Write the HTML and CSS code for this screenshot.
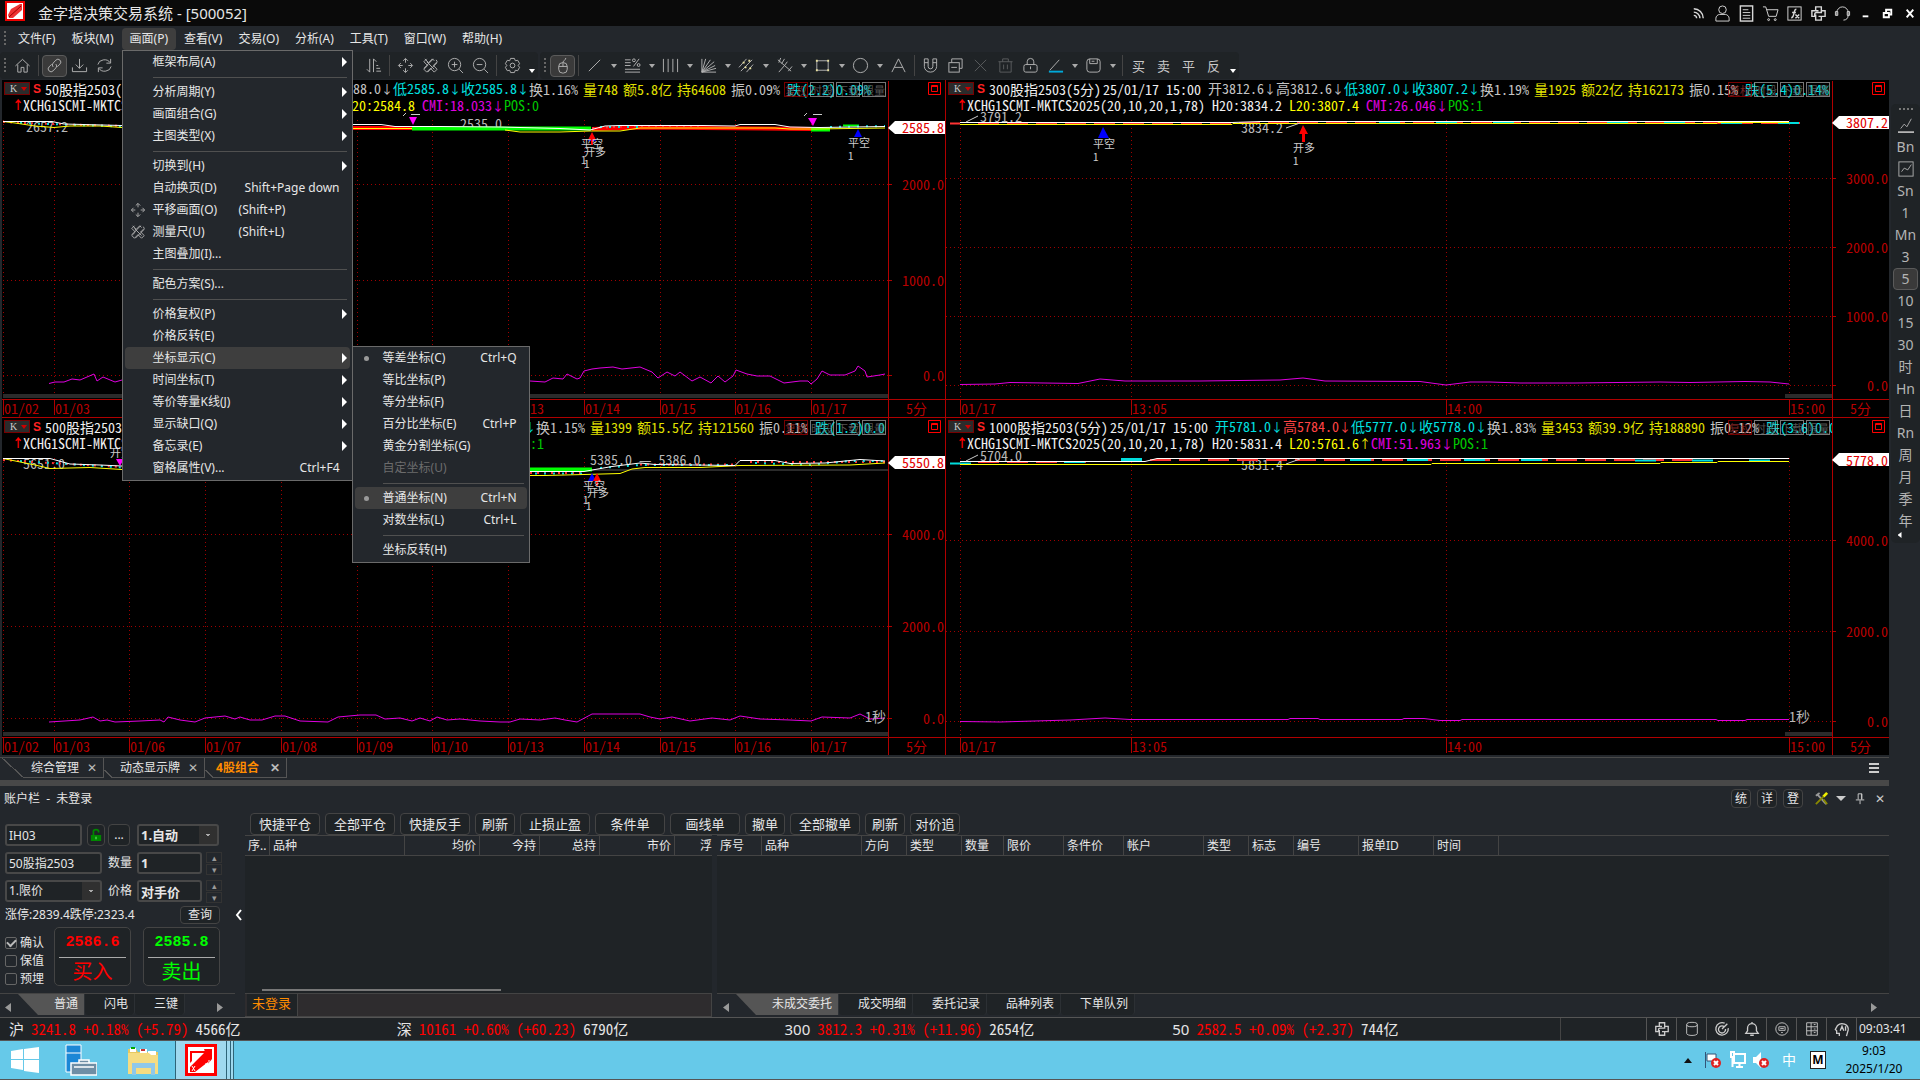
FILE: index.html
```html
<!DOCTYPE html>
<html lang="zh-CN">
<head>
    <meta charset="UTF-8">
    <meta name="viewport" content="width=device-width, initial-scale=1.0">
    <title>金字塔决策交易系统 - [500052]</title>
    <link rel="stylesheet" href="styles.css">
</head>
<body>
    <!-- 图标库 -->
    <svg class="sprite" aria-hidden="true">
        <symbol id="i-home" viewBox="0 0 18 18"><path d="M1.500 9.500 9 2.500l7.500 7M4 8v8h3.500v-5h3v5H14V8"/></symbol>
        <symbol id="i-link" viewBox="0 0 18 18"><path d="M7.500 10.500a3 3 0 0 1 0-4l3-3.200a3 3 0 0 1 4.300 4.200L12 10.300M10.500 7.500a3 3 0 0 1 0 4l-3 3.200a3 3 0 0 1-4.300-4.200L6 7.700"/></symbol>
        <symbol id="i-down" viewBox="0 0 18 18"><path d="M9 2v10M5 8l4 4 4-4M1.500 11v4.500h15V11"/></symbol>
        <symbol id="i-refresh" viewBox="0 0 18 18"><path d="M2 8a7 6 0 0 1 13-2M15.500 2v4.500H11M16 10a7 6 0 0 1-13 2M2.500 16v-4.500H7"/></symbol>
        <symbol id="i-sort" viewBox="0 0 18 18"><path d="M5 2v14l-3-3M9 16V2l3 3M12 9h2M12 12h4M12 15h5"/></symbol>
        <symbol id="i-move" viewBox="0 0 18 18"><path d="M9 6V2M6.500 4 9 1.500 11.500 4M9 12v4M6.500 14 9 16.500l2.500-2.500M6 9H2M4 6.500 1.500 9 4 11.500M12 9h4M14 6.500 16.500 9 14 11.500"/></symbol>
        <symbol id="i-ruler" viewBox="0 0 18 18"><path d="m3 2 4 4 4-4 2 2M15 3l1 2-4 4 4 4-3 3-4-4-4 4-3-3 4-4-4-4 3-3M12 2 2 12M16 6 6 16M5 5l8 8"/></symbol>
        <symbol id="i-zin" viewBox="0 0 18 18"><circle cx="8" cy="8" r="6.500"/><path d="m13 13 4 4M5 8h6M8 5v6"/></symbol>
        <symbol id="i-zout" viewBox="0 0 18 18"><circle cx="8" cy="8" r="6.500"/><path d="m13 13 4 4M5 8h6"/></symbol>
        <symbol id="i-gear" viewBox="0 0 18 18"><path d="M7 1.500h4l1 2.500 2.500-.5 2 3.500-1.500 2 1.500 2-2 3.500L12 14l-1 2.500H7L6 14l-2.500.5-2-3.500L3 9 1.500 7l2-3.500L6 4z"/><circle cx="9" cy="9" r="2.500"/></symbol>
        <symbol id="i-mouse" viewBox="0 0 18 18"><rect x="5" y="6" width="9" height="11" rx="4"/><path d="M5 10h9M9.500 6v4M9.500 6c0-3 3-2 3-5"/></symbol>
        <symbol id="i-line" viewBox="0 0 18 18"><path d="M3 15 15 3"/></symbol>
        <symbol id="i-pct" viewBox="0 0 18 18"><path d="M1 3h6M1 6h6M1 9h6M1 13h16M1 16h16M16 2 10 10"/><circle cx="10.500" cy="3.500" r="1.500"/><circle cx="15.500" cy="8.500" r="1.500"/></symbol>
        <symbol id="i-bars" viewBox="0 0 18 18"><path d="M1.500 2v14M6.500 2v14M11.500 2v14M16.500 2v14"/></symbol>
        <symbol id="i-fan" viewBox="0 0 18 18"><path d="M2 2v14h15M2 16 6 2M2 16 11 3M2 16 15 5M2 16l14-7M2 16l15-4"/></symbol>
        <symbol id="i-hatch" viewBox="0 0 18 18"><path d="M1 11 9 2M3 15 15 3M9 16l7-8"/><path stroke="#e8e0a0" stroke-width="2" d="M5 6h2M11 4h2M7 11h2M12 12h2"/></symbol>
        <symbol id="i-fork" viewBox="0 0 18 18"><path d="m2 3 14 12M3 16 9 9M5 1 3 6M9 2 6 7M12 5 9 9M17 10l-4 5"/></symbol>
        <symbol id="i-rect" viewBox="0 0 18 18"><rect x="3" y="4" width="12" height="10"/><path stroke="#e8e0a0" stroke-width="2" d="M2 4h2M14 4h2M2 14h2M14 14h2"/></symbol>
        <symbol id="i-circle" viewBox="0 0 18 18"><circle cx="9" cy="9" r="7.500"/></symbol>
        <symbol id="i-text" viewBox="0 0 18 18"><path d="M2 16 9 2l7 14M4.500 11h9"/></symbol>
        <symbol id="i-magnet" viewBox="0 0 18 18"><path d="M2.500 2v8a6.500 6 0 0 0 13 0V2h-4v8a2.500 2.500 0 0 1-5 0V2zM2.500 6h4M11.500 6h4"/></symbol>
        <symbol id="i-copy" viewBox="0 0 18 18"><rect x="2" y="6" width="11" height="10"/><path d="M5 6V2h11v10h-3M4.500 11h6"/></symbol>
        <symbol id="i-x" viewBox="0 0 18 18"><path d="m3 3 12 12M15 3 3 15"/></symbol>
        <symbol id="i-trash" viewBox="0 0 18 18"><path d="M1.500 5h15M6 5V2h6v3M3 5v11h12V5M7 8v5M11 8v5"/></symbol>
        <symbol id="i-lock" viewBox="0 0 18 18"><rect x="2" y="8" width="14" height="8" rx="2"/><path d="M5.500 8V5a3.500 3.500 0 0 1 7 0v3M9 10v3"/></symbol>
        <symbol id="i-pen" viewBox="0 0 18 18"><path d="M3 14 13 3"/><path stroke="#00a8d8" stroke-width="2" d="M2 15.500h15"/></symbol>
        <symbol id="i-save" viewBox="0 0 18 18"><rect x="2" y="2" width="14" height="14" rx="3"/><path d="M5 2v5h8V2M7 4.500h3"/></symbol>
        <symbol id="i-rss" viewBox="0 0 18 18"><path d="M4 4a10 10 0 0 1 10 10M4 7.500a6.500 6.500 0 0 1 6.500 6.500M4 11a3 3 0 0 1 3 3" stroke-width="1.500"/></symbol>
        <symbol id="i-user" viewBox="0 0 18 18"><circle cx="9" cy="5" r="4"/><path d="M2 17v-3c0-2 2-4 4-4h6c2 0 4 2 4 4v3z"/></symbol>
        <symbol id="i-doc" viewBox="0 0 18 18"><rect x="2.500" y="1" width="13" height="16" stroke-width="1.500"/><path d="M5 5h6M5 8h8M5 11h8M5 14h8"/></symbol>
        <symbol id="i-cart" viewBox="0 0 18 18"><path d="M1 2h3l3 10h8l2-7H5"/><circle cx="7" cy="15.500" r="1"/><circle cx="14" cy="15.500" r="1"/></symbol>
        <symbol id="i-fx" viewBox="0 0 18 18"><rect x="2" y="2" width="14" height="14"/><path stroke-width="1.500" d="M11 4.500c-2 0-2 2-2.500 4S8 13.500 5.500 13.500M6.500 8h4M10 10l4 4M14 10l-4 4"/></symbol>
        <symbol id="i-py" viewBox="0 0 18 18"><path stroke-width="1.500" d="M6 6V2h6v6H7c-1 0-2 1-2 2v2H2V6h7M12 6h4v6H9M6 10v6h6v-4"/></symbol>
        <symbol id="i-head" viewBox="0 0 18 18"><path d="M3 11V8a6 6 0 0 1 12 0v3c0 3-2 5-5 5M1.500 7v4H4V7zM14 7v4h2.500V7z"/></symbol>
        <symbol id="i-trend" viewBox="0 0 18 18"><path d="M3 13l4-5 3 3 5-9"/><path stroke-width="2" d="M0 17h18"/></symbol>
        <symbol id="i-trendbox" viewBox="0 0 18 18"><rect x="1" y="1" width="16" height="16"/><path d="m4 12 3-4 4 2 4-6"/></symbol>
        <symbol id="i-db" viewBox="0 0 18 18"><ellipse cx="9" cy="4" rx="6" ry="2.500"/><path d="M3 4v10c0 3 12 3 12 0V4"/></symbol>
        <symbol id="i-target" viewBox="0 0 18 18"><path stroke-width="1.500" d="M12 2.500A7 7 0 1 0 16 8M11 6a4 4 0 1 0 2 3M9 9l6-6"/></symbol>
        <symbol id="i-bell" viewBox="0 0 18 18"><path stroke-width="1.500" d="M2 14h14l-2-3V8a5 5 0 0 0-10 0v3zM7 16h4M9 1v2"/></symbol>
        <symbol id="i-chat" viewBox="0 0 18 18"><circle cx="9" cy="9" r="7"/><path d="M5.500 6.500h7v4h-7zM8 13h2M7 8.500h4"/></symbol>
        <symbol id="i-server" viewBox="0 0 18 18"><path d="M3 2h12v14H3zM3 6.500h12M3 11h12M8 2v14M11 4h2M11 9h2M11 13h2"/></symbol>
        <symbol id="i-ai" viewBox="0 0 18 18"><path stroke-width="1.500" d="M6 17v-3H3v-3L1.500 9.500 4 5a7 6.500 0 0 1 12 5l-2 7M7 11l2-5 2 5M13 6v5"/></symbol>
        <symbol id="i-restore" viewBox="0 0 13 13"><path stroke="#f00" d="M.5.5h12v12H.5zM3.500 3.500h6v6h-6zM3 4.500h7"/></symbol>
    </svg>

    <header class="titlebar">
        <svg class="logo" viewBox="0 0 20 20"><path fill="#e00" d="M0 0h20v20H0z"/><path fill="#fff" d="M2 2h16v16H2z"/><path fill="#e33" d="m3 14 3-6 9-5h2v6l-9 8H4z"/><path stroke="#900" d="m4 16 12-11"/></svg>
        <h1>金字塔决策交易系统 - [500052]</h1>
        <div class="title-tools">
            <button aria-label="资讯"><svg class="icon"><use href="#i-rss"/></svg></button>
            <button aria-label="用户"><svg class="icon"><use href="#i-user"/></svg></button>
            <button aria-label="文档"><svg class="icon"><use href="#i-doc"/></svg></button>
            <button aria-label="商城"><svg class="icon"><use href="#i-cart"/></svg></button>
            <button aria-label="公式"><svg class="icon"><use href="#i-fx"/></svg></button>
            <button aria-label="Python"><svg class="icon"><use href="#i-py"/></svg></button>
            <button aria-label="客服"><svg class="icon"><use href="#i-head"/></svg></button>
            <button class="win" aria-label="最小化"><svg class="icon" viewBox="0 0 18 18"><path d="M6 12h6"/></svg></button>
            <button class="win" aria-label="还原"><svg class="icon" viewBox="0 0 18 18"><path d="M7.500 8V5H13v5h-2.500M5 8.500h5.500V13H5z"/></svg></button>
            <button class="win" aria-label="关闭"><svg class="icon" viewBox="0 0 18 18"><path d="m6 5 7 8M13 5l-7 8"/></svg></button>
        </div>
    </header>

    <nav class="menubar">
        <span class="grip"></span>
        <div class="menu"><button>文件(F)</button></div>
        <div class="menu"><button>板块(M)</button></div>
        <div class="menu open">
            <button>画面(P)</button>
            <ul class="popup">
                <li><button><span>框架布局(A)</span><i class="more"></i></button></li>
                <li class="sep"></li>
                <li><button><span>分析周期(Y)</span><i class="more"></i></button></li>
                <li><button><span>画面组合(G)</span><i class="more"></i></button></li>
                <li><button><span>主图类型(X)</span><i class="more"></i></button></li>
                <li class="sep"></li>
                <li><button><span>切换到(H)</span><i class="more"></i></button></li>
                <li><button><span>自动换页(D)</span><kbd>Shift+Page down</kbd></button></li>
                <li><button><svg class="icon"><use href="#i-move"/></svg><span>平移画面(O)</span><kbd class="near">(Shift+P)</kbd></button></li>
                <li><button><svg class="icon"><use href="#i-ruler"/></svg><span>测量尺(U)</span><kbd class="near">(Shift+L)</kbd></button></li>
                <li><button><span>主图叠加(I)...</span></button></li>
                <li class="sep"></li>
                <li><button><span>配色方案(S)...</span></button></li>
                <li class="sep"></li>
                <li><button><span>价格复权(P)</span><i class="more"></i></button></li>
                <li><button><span>价格反转(E)</span></button></li>
                <li class="active">
                    <button><span>坐标显示(C)</span><i class="more"></i></button>
                    <ul class="popup sub">
                        <li><button><b class="dot"></b><span>等差坐标(C)</span><kbd>Ctrl+Q</kbd></button></li>
                        <li><button><span>等比坐标(P)</span></button></li>
                        <li><button><span>等分坐标(F)</span></button></li>
                        <li><button><span>百分比坐标(E)</span><kbd>Ctrl+P</kbd></button></li>
                        <li><button><span>黄金分割坐标(G)</span></button></li>
                        <li><button disabled><span>自定坐标(U)</span></button></li>
                        <li class="sep"></li>
                        <li class="active"><button><b class="dot"></b><span>普通坐标(N)</span><kbd>Ctrl+N</kbd></button></li>
                        <li><button><span>对数坐标(L)</span><kbd>Ctrl+L</kbd></button></li>
                        <li class="sep"></li>
                        <li><button><span>坐标反转(H)</span></button></li>
                    </ul>
                </li>
                <li><button><span>时间坐标(T)</span><i class="more"></i></button></li>
                <li><button><span>等价等量K线(J)</span><i class="more"></i></button></li>
                <li><button><span>显示缺口(Q)</span><i class="more"></i></button></li>
                <li><button><span>备忘录(E)</span><i class="more"></i></button></li>
                <li><button><span>窗格属性(V)...</span><kbd>Ctrl+F4</kbd></button></li>
            </ul>
        </div>
        <div class="menu"><button>查看(V)</button></div>
        <div class="menu"><button>交易(O)</button></div>
        <div class="menu"><button>分析(A)</button></div>
        <div class="menu"><button>工具(T)</button></div>
        <div class="menu"><button>窗口(W)</button></div>
        <div class="menu"><button>帮助(H)</button></div>
    </nav>

    <div class="toolbars">
        <div class="toolbar main-tools">
            <span class="grip"></span>
            <button class="tool" aria-label="主页"><svg class="icon"><use href="#i-home"/></svg></button>
            <span class="bar"></span>
            <button class="tool on" aria-label="联动"><svg class="icon"><use href="#i-link"/></svg></button>
            <button class="tool" aria-label="下载"><svg class="icon"><use href="#i-down"/></svg></button>
            <button class="tool" aria-label="刷新"><svg class="icon"><use href="#i-refresh"/></svg></button>
            <span class="fill"></span>
            <button class="tool" aria-label="排序"><svg class="icon"><use href="#i-sort"/></svg></button>
            <span class="bar"></span>
            <button class="tool" aria-label="平移"><svg class="icon"><use href="#i-move"/></svg></button>
            <button class="tool" aria-label="测量"><svg class="icon"><use href="#i-ruler"/></svg></button>
            <button class="tool" aria-label="放大"><svg class="icon"><use href="#i-zin"/></svg></button>
            <button class="tool" aria-label="缩小"><svg class="icon"><use href="#i-zout"/></svg></button>
            <span class="bar"></span>
            <button class="tool" aria-label="设置"><svg class="icon"><use href="#i-gear"/></svg></button>
            <i class="caret low"></i>
        </div>
        <div class="toolbar">
            <span class="grip"></span>
            <button class="tool on" aria-label="鼠标"><svg class="icon"><use href="#i-mouse"/></svg></button>
            <span class="bar"></span>
            <button class="tool" aria-label="直线"><svg class="icon"><use href="#i-line"/></svg></button><i class="caret"></i>
            <button class="tool" aria-label="百分比线"><svg class="icon"><use href="#i-pct"/></svg></button><i class="caret"></i>
            <button class="tool" aria-label="周期线"><svg class="icon"><use href="#i-bars"/></svg></button><i class="caret"></i>
            <button class="tool" aria-label="扇形线"><svg class="icon"><use href="#i-fan"/></svg></button><i class="caret"></i>
            <button class="tool" aria-label="通道线"><svg class="icon"><use href="#i-hatch"/></svg></button><i class="caret"></i>
            <button class="tool" aria-label="叉线"><svg class="icon"><use href="#i-fork"/></svg></button><i class="caret"></i>
            <button class="tool" aria-label="矩形"><svg class="icon"><use href="#i-rect"/></svg></button><i class="caret"></i>
            <button class="tool" aria-label="圆"><svg class="icon"><use href="#i-circle"/></svg></button><i class="caret"></i>
            <button class="tool" aria-label="文字"><svg class="icon"><use href="#i-text"/></svg></button>
            <span class="bar"></span>
            <button class="tool" aria-label="吸附"><svg class="icon"><use href="#i-magnet"/></svg></button>
            <button class="tool" aria-label="复制"><svg class="icon"><use href="#i-copy"/></svg></button>
            <button class="tool" aria-label="删除" disabled><svg class="icon"><use href="#i-x"/></svg></button>
            <button class="tool" aria-label="清空" disabled><svg class="icon"><use href="#i-trash"/></svg></button>
            <button class="tool" aria-label="锁定"><svg class="icon"><use href="#i-lock"/></svg></button>
            <button class="tool" aria-label="颜色"><svg class="icon"><use href="#i-pen"/></svg></button><i class="caret"></i>
            <button class="tool" aria-label="保存"><svg class="icon"><use href="#i-save"/></svg></button><i class="caret"></i>
            <span class="bar"></span>
            <button class="tool">买</button>
            <button class="tool">卖</button>
            <button class="tool">平</button>
            <button class="tool">反</button>
            <i class="caret low"></i>
        </div>
    </div>

    <div class="main">
        <main class="workspace">
            <div class="charts">
                <!-- 50股指 -->
                <section class="pane">
                    <svg class="chart" viewBox="2 80 943 337" preserveAspectRatio="none">
                        <path class="grid" d="M3.500 120V394M54.500 120V394M129.500 120V394M205.500 120V394M281.500 120V394M357.500 120V394M432.500 120V394M508.500 120V394M584.500 120V394M660.500 120V394M735.500 120V394M811.500 120V394M3 184.500H888M3 280.500H888M3 375.500H888"/>
                        <path class="thumb" d="M3 394h885v4H3z"/>
                        <path class="axis" d="M888.500 81V417M2 399.500H945M3.500 400v15M54.500 400v15M129.500 400v15M205.500 400v15M281.500 400v15M357.500 400v15M432.500 400v15M508.500 400v15M584.500 400v15M660.500 400v15M735.500 400v15M811.500 400v15M888 184.500h4M888 280.500h4M888 375.500h4"/>
                        <text class="note" x="26" y="132">2657.2</text>
                        <text class="note" x="460" y="129">2535.0</text>
                        <path class="band-red" d="M353 128H412M592 129 640 127.500 811 129"/>
                        <path class="band-green" d="M412 128.500H591M811 129.500H830"/>
                        <path stroke="#0f0" stroke-width="2" d="M843 125.500h16"/>
                        <path class="up" d="M3 122 50 124 122 126M592 128 640 126H703"/>
                        <path class="down" d="M20 123 122 126.500M600 127H640M830 127 885 126"/>
                        <path class="low" d="M3 121.500 15 123 35 126 54 127.500 70 126H100L122 127.500M353 128.500H412M505 130 520 132H560L590 131H620L640 128H775L790 129 815 129 885 128"/>
                        <path class="high" d="M3 121.500H52L64 124 122 125.500M353 124.500H381L395 126.500H440L500 127 560 128.500 590 130 605 126 620 125.500H703L735 126 740 124.500H775L790 127 820 127.500 885 126.500"/>
                        <path class="cmi" d="M49 383.500 55 382 64 382 72 379 80 380 94 374 97 381 103 377 115 382 122 380M530 381 545 382 553 378 563 379 567 374 577 379 580 378 584 371 592 369 600 368 613 367 622 369 640 367 652 372 658 378 667 372 675 376 680 372 692 381 700 377 711 383 718 376 725 382 733 376 736 370 747 374 757 376 770 376 784 383 800 381 808 381 811 384 817 379 822 371 830 375 845 375 855 371 858 366 865 371 867 377 880 375 885 374"/>
                        <path fill="#f0f" d="M409 117h8l-4 8zM808 118h9l-4 8z"/>
                        <path fill="#00f" d="m588 141 4-8 4 8zM854 137l4-8 4 8z"/>
                        <path fill="#f00" d="m588 140 4-8 4 8h-3v5h-2v-5z"/>
                        <path stroke="#ccc" d="M403 116l3-3M411 114.500h9M804 116l3-3M813 114.500h9"/>
                        <g class="mark"><text x="581" y="148">平空</text><text x="584" y="156">开多</text><text x="581" y="164">1</text><text x="584" y="168">1</text><text x="848" y="147">平空</text><text x="848" y="160">1</text></g>
                        <path fill="#fff" d="M888 128l7-7h50v13h-50z"/><text class="last" x="902" y="133">2585.8</text>
                        <g class="tick"><text x="4" y="414">01/02</text><text x="55" y="414">01/03</text><text x="130" y="414">01/06</text><text x="206" y="414">01/07</text><text x="282" y="414">01/08</text><text x="358" y="414">01/09</text><text x="433" y="414">01/10</text><text x="509" y="414">01/13</text><text x="585" y="414">01/14</text><text x="661" y="414">01/15</text><text x="736" y="414">01/16</text><text x="812" y="414">01/17</text><text x="906" y="414">5分</text>
                        <text x="902" y="190">2000.0</text><text x="902" y="286">1000.0</text><text x="923" y="381">0.0</text></g>
                    </svg>
                    <div class="pane-head">
                        <div class="quote"><button class="ktype">K<i></i></button><b class="s">S</b><span class="name">50股指2503(5分)</span><span>25/01/17 15:00 </span><span class="gr">开2588.0<i>↓</i>高2588.0<i>↓</i></span><span class="cy">低2585.8<i>↓</i>收2585.8<i>↓</i></span><span class="gr t">换1.16%</span><span class="ye t">量748</span><span class="ye t">额5.8亿</span><span class="ye t">持64608</span><span class="gr">振0.09% </span><span class="cy">跌(2.2)0.09%</span></div>
                        <div class="study"><b>↑</b><span>XCHG1SCMI-MKTCS2025(20,10,20,1,78) H20:2588.2 </span><span class="yl">L20:2584.8 </span><span class="mg">CMI:18.033<i>↓</i></span><span class="gn">POS:0</span></div>
                    </div>
                    <div class="tags"><button>复权</button><button>时段</button><button>下载</button><button>限量</button></div>
                    <button class="restore" aria-label="最大化窗格"><svg><use href="#i-restore"/></svg></button>
                </section>

                <!-- 300股指 -->
                <section class="pane">
                    <svg class="chart" viewBox="946 80 943 337" preserveAspectRatio="none">
                        <path class="grid" d="M960.500 120V398M1131.500 120V398M1446.500 120V398M1789.500 120V398M946 178.500H1832M946 247.500H1832M946 316.500H1832M946 385.500H1832"/>
                        <path class="thumb" d="M1785 394h47v4h-47z"/>
                        <path class="axis" d="M1832.500 81V417M946 399.500H1889M960.500 400v15M1131.500 400v15M1446.500 400v15M1789.500 400v15M1832 178.500h4M1832 247.500h4M1832 316.500h4M1832 385.500h4"/>
                        <text class="note" x="980" y="122">3791.2</text>
                        <text class="note" x="1241" y="133">3834.2</text>
                        <path class="up wide" d="M950 123.500H960M978 123H1800"/>
                        <path class="down wide" d="M1379 123H1520M1607 123H1800"/>
                        <path class="low" d="M960 124.500H1232L1233 123.500H1717L1718 122.500H1789"/>
                        <path class="high" d="M960 122.500H1232L1260 121.500H1789"/>
                        <path stroke="#ccc" d="m966 122 12-6M1286 128l14-5"/>
                        <path class="cmi" d="M960 384.500 995 384 1010 382.500 1078 383.500 1100 379 1125 381 1200 381 1280 380 1303 378 1325 381 1420 381.500 1446 385 1470 382 1490 382 1520 383 1575 383 1660 382 1690 382.500 1745 381.500 1770 382 1789 384"/>
                        <path fill="#00f" d="m1098 138 5-11 6 11z"/>
                        <path fill="#f00" d="m1299 134 4-9 5 9h-3v8h-3v-8z"/>
                        <g class="mark"><text x="1093" y="148">平空</text><text x="1093" y="161">1</text><text x="1293" y="152">开多</text><text x="1293" y="165">1</text></g>
                        <path fill="#fff" d="m1832 123 7-7h50v13h-50z"/><text class="last" x="1846" y="128">3807.2</text>
                        <g class="tick"><text x="961" y="414">01/17</text><text x="1132" y="414">13:05</text><text x="1447" y="414">14:00</text><text x="1790" y="414">15:00</text><text x="1850" y="414">5分</text>
                        <text x="1846" y="184">3000.0</text><text x="1846" y="253">2000.0</text><text x="1846" y="322">1000.0</text><text x="1867" y="391">0.0</text></g>
                    </svg>
                    <div class="pane-head">
                        <div class="quote"><button class="ktype">K<i></i></button><b class="s">S</b><span class="name">300股指2503(5分)</span><span>25/01/17 15:00 </span><span class="gr">开3812.6<i>↓</i>高3812.6<i>↓</i></span><span class="cy">低3807.0<i>↓</i>收3807.2<i>↓</i></span><span class="gr t">换1.19%</span><span class="ye t">量1925</span><span class="ye t">额22亿</span><span class="ye t">持162173</span><span class="gr">振0.15% </span><span class="cy">跌(5.4)0.14%</span></div>
                        <div class="study"><b>↑</b><span>XCHG1SCMI-MKTCS2025(20,10,20,1,78) H20:3834.2 </span><span class="yl">L20:3807.4 </span><span class="mg">CMI:26.046<i>↓</i></span><span class="gn">POS:1</span></div>
                    </div>
                    <div class="tags"><button>复权</button><button>时段</button><button>下载</button><button>限量</button></div>
                    <button class="restore" aria-label="最大化窗格"><svg><use href="#i-restore"/></svg></button>
                </section>

                <!-- 500股指 -->
                <section class="pane">
                    <svg class="chart" viewBox="2 418 943 337" preserveAspectRatio="none">
                        <path class="grid" d="M3.500 458V732M54.500 458V732M129.500 458V732M205.500 458V732M281.500 458V732M357.500 458V732M432.500 458V732M508.500 458V732M584.500 458V732M660.500 458V732M735.500 458V732M811.500 458V732M3 534.500H888M3 626.500H888M3 718.500H888"/>
                        <path class="thumb" d="M3 732h885v4H3zM592 469h296v2H592z"/>
                        <path class="axis" d="M888.500 418V755M2 737.500H945M3.500 738v15M54.500 738v15M129.500 738v15M205.500 738v15M281.500 738v15M357.500 738v15M432.500 738v15M508.500 738v15M584.500 738v15M660.500 738v15M735.500 738v15M811.500 738v15M888 534.500h4M888 626.500h4M888 718.500h4"/>
                        <text class="note" x="23" y="469">5651.0</text>
                        <text class="note" x="590" y="465">5385.0 — 5386.0</text>
                        <path class="band-green" d="M530 469.500H592"/>
                        <path class="up" d="M3 460 50 463 122 467M530 473H584M640 464.500H735M750 462H885"/>
                        <path class="down" d="M20 461 122 467.500M535 473.500H584M600 468 640 465H735M755 463 810 465 850 461H885"/>
                        <path class="low" d="M3 458.500 35 465 50 468.500 90 467.500 122 469.500M530 475.500H545L584 474.500 620 473.500 632 469 645 467.500H700L740 465.500 850 465 885 463"/>
                        <path class="high" d="M3 458.500H50L70 464 100 465 122 466M530 471.500H584L595 469.500 612 466.500 640 463 655 464.500 735 465.500 740 460.500H775L790 463.500 825 463 860 459.500 885 461"/>
                        <path class="cmi" d="M49 722 80 720 93 717 100 721 107 720 115 722 140 721 160 720 164 722 168 717 180 720 195 722 205 718 225 716 235 719 240 717 250 720 262 720 275 716 285 716 300 721 328 722 338 717 360 715 376 715 385 719 400 718 412 721 420 718 430 721 437 717 447 720 460 719 480 721 500 722 510 722 520 719 540 720 555 718 565 720 577 722 592 714 640 714 650 717 660 719 672 717 690 721 712 718 730 720 740 716 760 719 790 720 811 721 822 717 850 718 860 714 870 719 885 718"/>
                        <path fill="#f0f" d="M116 459h8l-4 7z"/>
                        <path fill="#00f" d="m588 481 4-8 4 8z"/>
                        <path fill="#f00" d="m593 481 4-8 4 8h-3v5h-2v-5z"/>
                        <g class="mark"><text x="110" y="457">开空</text><text x="583" y="490">平空</text><text x="587" y="497">开多</text><text x="583" y="504">1</text><text x="586" y="510">1</text></g>
                        <path fill="#fff" d="m888 463 7-7h50v13h-50z"/><text class="last" x="902" y="468">5550.8</text>
                        <text class="note" x="865" y="722">1秒</text>
                        <g class="tick"><text x="4" y="752">01/02</text><text x="55" y="752">01/03</text><text x="130" y="752">01/06</text><text x="206" y="752">01/07</text><text x="282" y="752">01/08</text><text x="358" y="752">01/09</text><text x="433" y="752">01/10</text><text x="509" y="752">01/13</text><text x="585" y="752">01/14</text><text x="661" y="752">01/15</text><text x="736" y="752">01/16</text><text x="812" y="752">01/17</text><text x="906" y="752">5分</text>
                        <text x="902" y="540">4000.0</text><text x="902" y="632">2000.0</text><text x="923" y="724">0.0</text></g>
                    </svg>
                    <div class="pane-head">
                        <div class="quote"><button class="ktype">K<i></i></button><b class="s">S</b><span class="name">500股指2503(5分)</span><span>25/01/17 15:00 </span><span class="gr">开5552.0<i>↓</i>高5556.8<i>↓</i></span><span class="cy">低5550.6<i>↓</i>收5550.8<i>↓</i></span><span class="gr t">换1.15%</span><span class="ye t">量1399</span><span class="ye t">额15.5亿</span><span class="ye t">持121560</span><span class="gr">振0.11% </span><span class="cy">跌(1.2)0.0</span></div>
                        <div class="study"><b>↑</b><span>XCHG1SCMI-MKTCS2025(20,10,20,1,78) H20:5588.6<i>↑</i></span><span class="yl">L20:5547.2 </span><span class="mg">CMI:52.419<i>↓</i></span><span class="gn">POS:1</span></div>
                    </div>
                    <div class="tags"><button>复权</button><button>时段</button><button>下载</button><button>限量</button></div>
                    <button class="restore" aria-label="最大化窗格"><svg><use href="#i-restore"/></svg></button>
                </section>

                <!-- 1000股指 -->
                <section class="pane">
                    <svg class="chart" viewBox="946 418 943 337" preserveAspectRatio="none">
                        <path class="grid" d="M960.500 458V736M1131.500 458V736M1446.500 458V736M1789.500 458V736M946 540.500H1832M946 631.500H1832M946 721.500H1832"/>
                        <path class="thumb" d="M1785 732h47v4h-47z"/>
                        <path class="axis" d="M1832.500 418V755M946 737.500H1889M960.500 738v15M1131.500 738v15M1446.500 738v15M1789.500 738v15M1832 540.500h4M1832 631.500h4M1832 721.500h4"/>
                        <text class="note" x="980" y="461">5704.0</text>
                        <text class="note" x="1241" y="470">5831.4</text>
                        <path class="up wide" d="M978 462H1093M1150 460H1700"/>
                        <path class="down wide" d="M950 463.500H980M1064 462H1095M1350 460H1545M1635 460.500H1800"/>
                        <path fill="#0dd" d="M1121 458h21v3h-21z"/>
                        <path class="low" d="M960 464.500H1431L1432 463.500H1660L1661 462.500H1717L1718 461.500H1789"/>
                        <path class="high" d="M960 461.500H1145L1157 458.500H1789"/>
                        <path stroke="#ccc" d="m966 461 12-6M1286 464l14-5"/>
                        <path class="cmi" d="M960 721.500 1000 722 1070 720 1105 718 1130 719.500H1288L1290 718.500H1318L1320 719.500H1402L1404 718.500H1424L1440 720.500H1460L1462 719.500H1716L1718 720.500H1745L1747 719.500H1789"/>
                        <path fill="#fff" d="m1832 460 7-7h50v13h-50z"/><text class="last" x="1846" y="466">5778.0</text>
                        <text class="note" x="1789" y="722">1秒</text>
                        <g class="tick"><text x="961" y="752">01/17</text><text x="1132" y="752">13:05</text><text x="1447" y="752">14:00</text><text x="1790" y="752">15:00</text><text x="1850" y="752">5分</text>
                        <text x="1846" y="546">4000.0</text><text x="1846" y="637">2000.0</text><text x="1867" y="727">0.0</text></g>
                    </svg>
                    <div class="pane-head">
                        <div class="quote"><button class="ktype">K<i></i></button><b class="s">S</b><span class="name">1000股指2503(5分)</span><span>25/01/17 15:00 </span><span class="cy">开5781.0<i>↓</i></span><span class="rd">高5784.0<i>↓</i></span><span class="cy">低5777.0<i>↓</i>收5778.0<i>↓</i></span><span class="gr t">换1.83%</span><span class="ye t">量3453</span><span class="ye t">额39.9亿</span><span class="ye t">持188890</span><span class="gr">振0.12% </span><span class="cy">跌(3.6)0.0</span></div>
                        <div class="study"><b>↑</b><span>XCHG1SCMI-MKTCS2025(20,10,20,1,78) H20:5831.4 </span><span class="yl">L20:5761.6<i>↑</i></span><span class="mg">CMI:51.963<i>↓</i></span><span class="gn">POS:1</span></div>
                    </div>
                    <div class="tags"><button>复权</button><button>时段</button><button>下载</button><button>限量</button></div>
                    <button class="restore" aria-label="最大化窗格"><svg><use href="#i-restore"/></svg></button>
                </section>
            </div>

            <div class="doc-tabs">
                <div class="doc-tab first"><a href="#">综合管理</a><button aria-label="关闭">✕</button></div>
                <div class="doc-tab"><a href="#">动态显示牌</a><button aria-label="关闭">✕</button></div>
                <div class="doc-tab current"><a href="#">4股组合</a><button aria-label="关闭">✕</button></div>
                <button class="burger" aria-label="窗口列表"></button>
            </div>
            <div class="splitter"></div>

            <section class="account">
                <div class="account-head">
                    <h2>账户栏&nbsp; -&nbsp; 未登录</h2>
                    <button class="mini">统</button>
                    <button class="mini">详</button>
                    <button class="mini">登</button>
                    <button class="plain wrench" aria-label="工具"><svg viewBox="0 0 16 16"><path stroke="#999" stroke-width="2" d="m2 5 4-3M3 3l10 11"/><path stroke="#ee0" stroke-width="3" d="m10 6 4-4"/><path stroke="#880" stroke-width="2" d="m2 14 8-8M10 9l4 5"/></svg></button>
                    <i class="caret big"></i>
                    <button class="plain" aria-label="固定"><svg viewBox="0 0 16 16"><path stroke="#ccc" d="M5.500 9V3h4v6M9 3v6M3 9.500h9M7.500 10v4"/></svg></button>
                    <button class="plain" aria-label="关闭">✕</button>
                </div>
                <div class="account-body">
                    <div class="order">
                        <form class="order-form">
                            <div class="row">
                                <input class="code" type="text" value="IH03" aria-label="代码">
                                <button type="button" class="box lockbtn" aria-label="锁定"><svg viewBox="0 0 14 16"><path fill="none" stroke="#080" stroke-width="2" d="M4 8V4c0-3 6-3 6 0v1"/><path fill="#080" d="M1 8h12v7H1z"/><path stroke="#8f8" d="M7 10v3"/></svg></button>
                                <button type="button" class="box dots">...</button>
                                <select class="auto" aria-label="方式"><option>1.自动</option></select>
                            </div>
                            <div class="row">
                                <input class="contract" type="text" value="50股指2503" aria-label="合约">
                                <label for="qty">数量</label>
                                <input class="val" id="qty" type="text" value="1">
                                <span class="spin"><button type="button" aria-label="加">▴</button><button type="button" aria-label="减">▾</button></span>
                            </div>
                            <div class="row last-row">
                                <select class="contract" aria-label="委托类型"><option>1.限价</option></select>
                                <label for="price">价格</label>
                                <input class="val" id="price" type="text" value="对手价">
                                <span class="spin"><button type="button" aria-label="加">▴</button><button type="button" aria-label="减">▾</button></span>
                            </div>
                            <div class="row limits"><span>涨停:2839.4跌停:2323.4</span><button type="button" class="box">查询</button></div>
                            <div class="row deal">
                                <div class="checks">
                                    <label><input type="checkbox" checked>确认</label>
                                    <label><input type="checkbox">保值</label>
                                    <label><input type="checkbox">预埋</label>
                                </div>
                                <button type="button" class="trade buy"><b>2586.6</b><span>买入</span></button>
                                <button type="button" class="trade sell"><b>2585.8</b><span>卖出</span></button>
                            </div>
                        </form>
                        <button class="collapse" aria-label="收起"><svg viewBox="0 0 8 12"><path fill="none" stroke="#fff" stroke-width="2" d="M6 1 2 6l4 5"/></svg></button>
                        <div class="tabs">
                            <i class="arrow left"></i>
                            <a class="on" href="#">普通</a><a href="#">闪电</a><a href="#">三键</a>
                            <i class="arrow right"></i>
                        </div>
                    </div>

                    <div class="tables">
                        <div class="actions">
                            <button>快捷平仓</button><button>全部平仓</button><button>快捷反手</button><button class="s">刷新</button><button>止损止盈</button><button>条件单</button><button>画线单</button><button class="s">撤单</button><button>全部撤单</button><button class="s">刷新</button><button class="m">对价追</button>
                        </div>
                        <div class="split">
                            <div class="positions">
                                <div class="sheet">
                                    <table>
                                        <colgroup><col class="w25"><col class="w135"><col class="w75"><col class="w60"><col class="w60"><col class="w75"><col></colgroup>
                                        <thead><tr><th>序..</th><th>品种</th><th class="r">均价</th><th class="r">今持</th><th class="r">总持</th><th class="r">市价</th><th class="r cut">浮</th></tr></thead>
                                    </table>
                                    <div class="hscroll"></div>
                                </div>
                                <div class="login-tabs"><a href="#">未登录</a></div>
                            </div>
                            <div class="orders">
                                <div class="sheet">
                                    <table>
                                        <colgroup><col class="w45"><col class="w100"><col class="w45"><col class="w55"><col class="w42"><col class="w60"><col class="w60"><col class="w80"><col class="w45"><col class="w45"><col class="w65"><col class="w75"><col class="w65"><col></colgroup>
                                        <thead><tr><th>序号</th><th>品种</th><th>方向</th><th>类型</th><th>数量</th><th>限价</th><th>条件价</th><th>帐户</th><th>类型</th><th>标志</th><th>编号</th><th>报单ID</th><th>时间</th><th class="cut"></th></tr></thead>
                                    </table>
                                </div>
                                <div class="tabs">
                                    <i class="arrow left"></i>
                                    <a class="on" href="#">未成交委托</a><a href="#">成交明细</a><a href="#">委托记录</a><a href="#">品种列表</a><a href="#">下单队列</a>
                                    <i class="arrow right"></i>
                                </div>
                            </div>
                        </div>
                    </div>
                </div>
            </section>
        </main>

        <aside class="periods">
            <div class="period-list">
                <span class="hgrip"></span>
                <button aria-label="分时"><svg class="icon"><use href="#i-trend"/></svg></button>
                <button>Bn</button>
                <button aria-label="走势"><svg class="icon"><use href="#i-trendbox"/></svg></button>
                <button>Sn</button>
                <button>1</button>
                <button>Mn</button>
                <button>3</button>
                <button class="on">5</button>
                <button>10</button>
                <button>15</button>
                <button>30</button>
                <button>时</button>
                <button>Hn</button>
                <button>日</button>
                <button>Rn</button>
                <button>周</button>
                <button>月</button>
                <button>季</button>
                <button>年</button>
                <i class="tri"></i>
            </div>
        </aside>
    </div>

    <footer class="status">
        <div class="index"><b>沪</b><span>3241.8 +0.18% (+5.79)</span><em>4566亿</em></div>
        <div class="index"><b>深</b><span>10161 +0.60% (+60.23)</span><em>6790亿</em></div>
        <div class="index"><b>300</b><span>3812.3 +0.31% (+11.96)</span><em>2654亿</em></div>
        <div class="index"><b>50</b><span>2582.5 +0.09% (+2.37)</span><em>744亿</em></div>
        <div class="blank"></div>
        <button aria-label="Python"><svg class="icon"><use href="#i-py"/></svg></button>
        <button aria-label="数据"><svg class="icon"><use href="#i-db"/></svg></button>
        <button aria-label="目标"><svg class="icon"><use href="#i-target"/></svg></button>
        <button aria-label="提醒"><svg class="icon"><use href="#i-bell"/></svg></button>
        <button aria-label="消息"><svg class="icon"><use href="#i-chat"/></svg></button>
        <button aria-label="服务器"><svg class="icon"><use href="#i-server"/></svg></button>
        <button aria-label="智能"><svg class="icon"><use href="#i-ai"/></svg></button>
        <time>09:03:41</time>
    </footer>

    <div class="taskbar">
        <button class="start" aria-label="开始"><svg viewBox="0 0 28 28"><path fill="#fff" d="M0 5 12 3v10H0zM13 3l15-2v12H13zM0 14h12v10L0 22zM13 14h15v13l-15-2z"/></svg></button>
        <button class="app" aria-label="服务器管理器"><svg viewBox="0 0 32 32"><path fill="#1b87d6" stroke="#fff" d="M1 1h15v27H1z"/><path stroke="#fff" d="M1 9h15"/><path fill="#6f8ea5" stroke="#fff" stroke-width="1.500" d="M6 19h26v12H6zM14 19v-3h10v3M9 23h20"/></svg></button>
        <button class="app" aria-label="资源管理器"><svg viewBox="0 0 32 32"><path fill="#e8c860" d="M1 5h8l2 3h20v22H1z"/><path fill="#fff" d="M3 4h6v4H3zM13 5h7v4h-7zM21 7h8v4h-8z"/><path fill="#f5dc82" d="M1 9h21l2 2h7v19H1z"/><path fill="#8fc8ea" d="M5 19h23v12h-4v-7H9v7H5z"/><path fill="#0a0" d="M4 3h4v2H4z"/><path fill="#c33" d="M14 5h4v2h-4z"/></svg></button>
        <button class="app running" aria-label="金字塔"><svg viewBox="0 0 32 32"><path fill="#f00" d="M0 0h32v32H0z"/><path fill="#fff" d="M3 3h26v26H3z"/><path fill="#f00" d="M5 7h15v2H7v8l-2 2zM19 5h8v10l-4 5v-2L10 28H5v-5L20 8z"/><path stroke="#fff" stroke-width="1" d="M20 20h4v-4M7 22l3 5M10 22l-3 5M12 9 9 15"/></svg></button>
        <span class="stack"></span>
        <div class="tray">
            <i class="uptri"></i>
            <svg viewBox="0 0 18 18"><path fill="#fff" stroke="#357" d="M1.500 1v16M3 3h9v7H3z"/><circle fill="#d22" cx="12" cy="12" r="5"/><path stroke="#fff" stroke-width="2" d="m10 10 4 4M14 10l-4 4"/></svg>
            <svg viewBox="0 0 18 18"><path fill="#66c9e9" stroke="#fff" stroke-width="2" d="M6 3h11v9H6zM8 16h7M11.500 12v4M3 1v5h3V1zM4.500 6v10"/></svg>
            <svg viewBox="0 0 18 18"><path fill="#fff" d="M1 6h3l5-5v16l-5-5H1z"/><circle fill="#d22" cx="12" cy="12" r="5"/><path stroke="#fff" stroke-width="2" d="m10 10 4 4M14 10l-4 4"/></svg>
            <span class="ime">中</span>
            <span class="m">M</span>
            <time>9:03<br>2025/1/20</time>
        </div>
    </div>
</body>
</html>
```
FILE: styles.css
```css
* { box-sizing: border-box; margin: 0; padding: 0; }
body { height: 100vh; display: flex; flex-direction: column; overflow: hidden; background: #23272c; color: #e6e6e6;
       font: 12px/16px "Noto Sans", "Noto Sans CJK SC", sans-serif; }
button, input, select { font: inherit; color: inherit; background: none; border: none; border-radius: 0; }
a { color: inherit; text-decoration: none; }
ul { list-style: none; }
i, em { font-style: normal; }
svg { fill: none; display: block; }
.sprite { width: 0; height: 0; position: absolute; }
.icon { width: 18px; height: 18px; stroke: #b4b4b4; stroke-width: 1; flex: none; }

/* 标题栏 */
.titlebar { height: 26px; flex: none; display: flex; align-items: center; background: #0a0a0a; }
.logo { width: 20px; height: 20px; margin: 0 13px 4px 5px; }
h1 { font-size: 15px; line-height: 20px; font-weight: normal; flex: 1; }
.title-tools { display: flex; }
.title-tools button { width: 24px; height: 24px; display: flex; align-items: center; justify-content: center; }
.title-tools .icon { stroke: #d8d8d8; width: 17px; height: 17px; }
.title-tools .win { width: 22px; }
.win .icon { stroke: #fff; stroke-width: 2; }

/* 菜单 */
.menubar { height: 26px; flex: none; display: flex; align-items: center; }
.grip { width: 2px; height: 16px; margin: 0 4px; background: repeating-linear-gradient(#666 0 2px, transparent 2px 4px); }
.menu { position: relative; }
.menu > button { height: 22px; padding: 0 8px; border-radius: 4px; white-space: nowrap; }
.menu.open > button { background: #3e3e3e; }
.popup { position: absolute; z-index: 10; top: 22px; left: 0; width: 231px; padding-bottom: 1px; background: #23272c; border: 1px solid #6a6a6a; }
.popup li { position: relative; padding: 0 2px; }
.popup button { width: 100%; height: 22px; padding: 0 10px 0 28px; display: flex; align-items: center; text-align: left; border-radius: 4px; white-space: nowrap; }
.popup .sep { height: 8px; margin: 0 5px 0 30px; padding: 0; background: linear-gradient(#505050, #505050) 0 4px / 100% 1px no-repeat; }
.popup .active > button { background: #3e3e3e; }
.popup .icon { width: 16px; height: 16px; margin: 0 7px 0 -23px; }
.popup span { flex: 1; }
.popup kbd { font: inherit; }
.popup .near { width: 101px; }
.more { border: 5px solid transparent; border-left-color: #fff; border-right: 0; margin-right: -7px; }
.popup button:disabled { color: #6c6c6c; }
.sub { top: -1px; left: 100%; width: 178px; }
.dot { width: 5px; height: 5px; border-radius: 3px; background: #9a9a9a; margin: 0 14px 0 -19px; }

/* 工具条 */
.toolbars { height: 28px; flex: none; display: flex; gap: 2px; }
.toolbar { display: flex; align-items: center; height: 27px; background: #1f2326; border-radius: 4px; }
.main-tools { width: 538px; }
.tool { width: 25px; height: 22px; flex: none; display: flex; align-items: center; justify-content: center; border-radius: 4px; font-size: 13px; color: #c8c8c8; }
.tool .icon { width: 17px; height: 17px; }
.tool.on { background: #3a3a3a; border: 1px solid #5a5a5a; }
.tool:disabled { opacity: .4; }
.bar { width: 1px; height: 21px; margin: 0 3px; background: #444; flex: none; }
.fill { flex: 1; }
.caret { width: 13px; flex: none; display: flex; justify-content: center; }
.caret::after { content: ""; border: 3px solid transparent; border-top: 4px solid #aaa; border-bottom: 0; }
.caret.low { padding-top: 10px; }
.caret.low::after { border-top-color: #fff; }

.main { flex: 1; min-height: 0; display: flex; }
.workspace { flex: 1; min-width: 0; display: flex; flex-direction: column; }

/* 四个行情窗格 */
.charts { flex: 1; min-height: 0; margin-left: 2px; display: grid; grid-template-columns: 1fr 1fr; grid-template-rows: 1fr 1fr; gap: 1px; background: #b00000; }
.pane { position: relative; min-width: 0; min-height: 0; background: #000; overflow: hidden; color: #f0f0f0;
        font: 14px/16px "Noto Sans CJK SC", monospace; font-feature-settings: "hwid"; }
.chart { width: 100%; height: 100%; }
.grid { stroke: #a00000; stroke-dasharray: 1 3; }
.axis { stroke: #b00000; }
.thumb { fill: #2b2b2b; }
.tick { fill: #b80000; }
.last { fill: #e00000; }
.note { fill: #b8b8b8; }
.mark { fill: #ccc; font-size: 11px; }
.high { stroke: #fff; stroke-width: 1; }
.low { stroke: #ff0; stroke-width: 1; }
.cmi { stroke: #e000e0; }
.up { stroke: #f33; stroke-width: 2; stroke-dasharray: 2 5; }
.down { stroke: #0dd; stroke-width: 2; stroke-dasharray: 2 7; }
.up.wide { stroke-dasharray: 21 8; }
.down.wide { stroke-dasharray: 21 36; }
.band-red { stroke: #f00; stroke-width: 4; }
.band-green { stroke: #0f0; stroke-width: 4; }
.pane-head { position: absolute; top: 0; left: 0; right: 57px; padding-bottom: 4px; overflow: hidden; }
.quote, .study { display: flex; align-items: center; white-space: pre; }
.quote { height: 17px; padding-left: 2px; }
.study { height: 16px; padding-left: 10px; }
.quote > *, .study > * { flex: none; }
.quote .name { margin-right: 2px; }
.quote .t { margin-right: 5px; }
.study b { width: 11px; color: #f00; font-size: 12px; }
.quote span i, .study span i { font-size: 12px; }
.ktype { width: 26px; height: 13px; display: flex; justify-content: space-between; align-items: center; padding: 0 2px 0 5px; background: #2b2b2b; border: 1px solid #700; font: 10px/11px "Liberation Serif", serif; color: #ccc; }
.ktype i { border: 3px solid transparent; border-top: 4px solid #c00; border-bottom: 0; }
.quote .s { width: 15px; padding-left: 3px; color: #f22; font: bold 12px/14px "Liberation Sans", sans-serif; }
.gr { color: #c4c4c4; }
.cy { color: #00e0e0; }
.ye { color: #e0e000; }
.yl { color: #ff0; }
.mg { color: #e000e0; }
.gn { color: #00c800; }
.rd { color: #f44; }
.tags { position: absolute; top: 2px; right: 59px; display: flex; gap: 2px; }
.tags button { width: 24px; height: 15px; border: 1px solid #aaa; color: #777; font-size: 11px; line-height: 12px; opacity: .7; }
.tags button:first-child { border-color: #a00; color: #a33; }
.restore { position: absolute; top: 2px; right: 4px; width: 13px; height: 13px; }
.restore svg { width: 13px; height: 13px; }

/* 页签 */
.doc-tabs { height: 25px; flex: none; display: flex; padding: 0 10px 0 3px; background: linear-gradient(#4a4a4a, #4a4a4a) 0 2px / 100% 1px no-repeat; }
.doc-tab { position: relative; height: 20px; margin-top: 3px; padding: 0 5px 0 16px; display: flex; align-items: center; border: 1px solid #555; border-width: 0 1px 1px 0; }
.doc-tab.first { padding-left: 28px; }
.doc-tab.current { color: #ff8c00; font-weight: bold; padding-left: 11px; }
.doc-tab button { width: 12px; margin-left: 7px; color: #bbb; font-size: 12px; }
.doc-tab.current button { margin-left: 10px; }
.doc-tab::before { content: ""; position: absolute; left: 0; bottom: -1px; width: 8px; height: 8px; background: linear-gradient(to top right, #23272c 50%, #555 50% 60%, transparent 60%); }
.doc-tab.first::before { left: -1px; width: 22px; height: 20px; background: linear-gradient(to top right, #23272c 48%, #555 48% 52%, transparent 52%); }
.burger { margin: 8px 0 0 auto; width: 10px; height: 10px; background: repeating-linear-gradient(#ccc 0 2px, transparent 2px 4px); }
.splitter { height: 6px; flex: none; background: #484848; }

/* 账户栏 */
.account { height: 231px; flex: none; display: flex; flex-direction: column; }
.account-head { height: 27px; display: flex; align-items: center; padding: 0 0 2px 4px; }
h2 { flex: 1; font-size: 12px; font-weight: normal; }
.mini { width: 20px; height: 19px; margin-right: 6px; border: 1px solid #444; border-radius: 4px; background: #1f2326; }
.plain { width: 19px; height: 16px; color: #ccc; }
.plain svg { width: 15px; height: 15px; margin: auto; }
.wrench { margin-left: 3px; }
.caret.big { width: 20px; }
.caret.big::after { border: 5px solid transparent; border-top-color: #ccc; border-bottom: 0; }
.account-body { flex: 1; display: flex; min-height: 0; }
.order { width: 245px; flex: none; display: grid; grid-template-columns: 228px 1fr; grid-template-rows: 180px 24px; }
.order-form { padding: 11px 0 0 5px; }
.row { display: flex; align-items: center; height: 22px; margin-bottom: 6px; }
.row input[type=text], .row select { height: 22px; padding: 0 2px; background: #1f2326; border: 2px solid #484848; border-radius: 3px; }
.row select { appearance: none; background:
    conic-gradient(from -45deg at 50% 100%, #aaa 90deg, transparent 0) right 6px center / 6px 3px no-repeat,
    linear-gradient(#303030, #303030) right / 18px 100% no-repeat, #1f2326; }
.code { width: 77px; margin-right: 5px; }
.box { height: 22px; border: 1px solid #444; border-radius: 4px; background: #1f2326; }
.lockbtn { width: 18px; margin-right: 3px; }
.lockbtn svg { width: 12px; height: 14px; margin: auto; }
.dots { width: 22px; margin-right: 7px; }
.auto { width: 82px; }
.auto, .val { font-weight: bold; font-size: 13px; }
.contract { width: 97px; }
.row > label { width: 35px; padding-left: 6px; }
.val { width: 65px; }
.spin { width: 16px; margin-left: 4px; display: flex; flex-direction: column; gap: 1px; }
.spin button { height: 11px; border: 1px solid #333; font-size: 9px; line-height: 9px; color: #999; }
.last-row { margin-bottom: 4px; }
.limits { height: 18px; margin-bottom: 3px; justify-content: space-between; padding-right: 8px; }
.limits .box { width: 40px; height: 18px; line-height: 14px; }
.deal { height: 59px; align-items: stretch; margin: 0; }
.checks { width: 49px; padding-top: 7px; }
.checks label { height: 18px; display: flex; align-items: center; gap: 3px; white-space: nowrap; }
.checks input { appearance: none; width: 12px; height: 12px; border: 1px solid #666; border-radius: 2px; }
.checks input:checked::after { content: ""; display: block; width: 7px; height: 4px; margin: 1px; border: solid #bbb; border-width: 0 0 2px 2px; transform: rotate(-45deg); }
.trade { width: 77px; margin-right: 12px; border: 1px solid #444; border-radius: 5px; background: #1f2326; display: flex; flex-direction: column; align-items: center; }
.trade b { width: 67px; height: 30px; border-bottom: 1px solid #aaa; font: bold 15px/29px "Liberation Mono", monospace; }
.trade span { font-size: 20px; line-height: 28px; }
.buy { color: #f00; }
.sell { color: #0f0; margin: 0; }
.collapse { width: 15px; padding: 3px; }
.collapse svg { width: 8px; height: 12px; margin: 24px 0 0 4px; }

.tabs { height: 24px; display: flex; border-top: 1px solid #444; padding-left: 6px; }
.tabs a { height: 21px; padding: 0 6px 0 19px; line-height: 19px; background: #1f2326; border-right: 1px solid #2c3034; border-radius: 0 0 4px 4px; }
.tabs a.on { background: #555; padding-left: 36px; margin-left: 7px; border-radius: 0; clip-path: polygon(0 0, 100% 0, 100% 100%, 20px 100%); }
.arrow { width: 6px; height: 9px; margin-top: 9px; background: #999; }
.arrow.left { clip-path: polygon(100% 0, 100% 100%, 0 50%); }
.arrow.right { clip-path: polygon(0 0, 100% 50%, 0 100%); margin-left: auto; margin-right: 12px; }
.order .tabs { grid-column: 1 / 3; margin-right: 10px; }
.order .arrow.left { margin-left: -1px; }

.tables { flex: 1; min-width: 0; display: flex; flex-direction: column; }
.actions { display: flex; gap: 5px; padding: 0 5px; height: 22px; }
.actions button { width: 70px; height: 22px; border: 1px solid #444; border-radius: 4px; background: #1f2326; font-size: 13px; line-height: 20px; }
.actions .s { width: 40px; }
.actions .m { width: 50px; }
.split { flex: 1; min-height: 0; display: flex; gap: 5px; }
.positions { width: 467px; flex: none; display: flex; flex-direction: column; }
.orders { flex: 1; min-width: 0; display: flex; flex-direction: column; }
.sheet { flex: 1; display: flex; flex-direction: column; justify-content: space-between; background: #1f2326; border-top: 1px solid #444; }
table { width: 100%; table-layout: fixed; border-collapse: separate; border-spacing: 0; }
th { height: 20px; padding: 0 3px; font-weight: normal; text-align: left; white-space: nowrap; overflow: hidden; background: #23272c; border: 1px solid #444; border-width: 0 1px 1px 0; }
th.r { text-align: right; }
th.cut { border-right: 0; padding: 0; }
.w25 { width: 25px; } .w42 { width: 42px; } .w45 { width: 45px; } .w55 { width: 55px; } .w60 { width: 60px; }
.w65 { width: 65px; } .w75 { width: 75px; } .w80 { width: 80px; } .w100 { width: 100px; } .w135 { width: 135px; }
.hscroll { width: 239px; height: 2px; margin: 0 0 2px 17px; background: #777; }
.login-tabs { height: 24px; padding-left: 2px; background: #2e2c2e; border: 1px solid #444; border-left: 0; }
.login-tabs a { display: block; width: 51px; height: 22px; padding-left: 5px; line-height: 19px; font-size: 13px; color: #ff8c00; background: #1f2326; border-right: 1px solid #444; }

/* 右侧周期栏 */
.periods { width: 31px; flex: none; padding: 24px 0 0 2px; }
.period-list { background: #1f2326; border-radius: 5px; padding-bottom: 5px; display: flex; flex-direction: column; align-items: center; color: #b4b4b4; font-size: 14px; }
.hgrip { width: 14px; height: 2px; margin: 4px 0; background: repeating-linear-gradient(90deg, #777 0 2px, transparent 2px 4px); }
.period-list button { width: 25px; height: 22px; display: flex; align-items: center; justify-content: center; }
.period-list .icon { width: 16px; height: 16px; }
.period-list .on { background: #3a3a3a; border: 1px solid #5a5a5a; border-radius: 4px; }
.tri { width: 4px; height: 6px; margin-right: 12px; background: #fff; clip-path: polygon(100% 0, 100% 100%, 0 50%); }

/* 状态栏 */
.status { height: 23px; flex: none; display: flex; background: #1f2326; border-top: 1px solid #555; padding-left: 9px; }
.index { flex: 388; display: flex; align-items: center; gap: 7px; font: 15px/20px "Noto Sans CJK SC", sans-serif; font-feature-settings: "hwid"; white-space: nowrap; }
.index b { font-weight: normal; font-family: "Noto Sans", "Noto Sans CJK SC", sans-serif; }
.index span { color: #f00; }
.blank { width: 86px; border-left: 1px solid #444; }
.status button { width: 30px; display: flex; align-items: center; justify-content: center; border-left: 1px solid #555; }
.status time { width: 64px; padding-left: 2px; line-height: 22px; border-left: 1px solid #555; }
.status .icon { width: 16px; height: 16px; stroke: #ccc; }

/* 任务栏 */
.taskbar { height: 40px; flex: none; display: flex; background: #66c9e9; border: 1px solid #555; border-width: 1px 0; color: #000; }
.start { width: 50px; padding: 0 0 0 11px; }
.start svg { width: 28px; height: 28px; }
.app { width: 62px; padding-left: 15px; }
.app svg { width: 32px; height: 32px; }
.app.running { width: 52px; margin-left: 1px; padding-left: 9px; background: #9fd9ef; border: 1px solid #2d6478; border-width: 0 1px; }
.stack { width: 8px; border: 1px solid #2d6478; border-width: 0 1px; margin-left: -1px; background: linear-gradient(90deg, #9fd9ef 3px, #2d6478 3px 4px, #9fd9ef 4px); }
.tray { margin-left: auto; display: flex; align-items: center; gap: 6px; padding-right: 12px; }
.tray svg { width: 18px; height: 18px; }
.uptri { border: 4px solid transparent; border-bottom: 5px solid #111; border-top: 0; margin-right: 6px; }
.ime { color: #fff; font-size: 14px; width: 16px; margin: 0 6px; }
.tray .m { width: 16px; height: 18px; background: #fff; border: 1px solid #222; text-align: center; font-weight: bold; }
.tray time { width: 76px; padding-left: 8px; text-align: center; line-height: 18px; }
```
